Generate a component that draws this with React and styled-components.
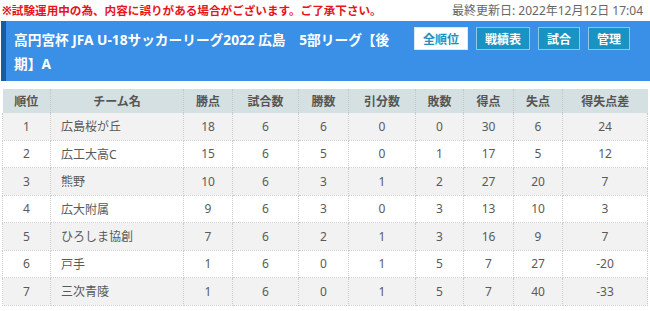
import React from "react";
import styled, { createGlobalStyle } from "styled-components";

const Global = createGlobalStyle`
  html, body { margin: 0; padding: 0; background: #fff; }
  body { font-family: "Noto Sans", "Noto Sans CJK JP", sans-serif; }
`;

const Page = styled.div`
  width: 650px;
`;

const Notice = styled.div`
  display: flex;
  justify-content: space-between;
  align-items: center;
  height: 21px;
  padding: 0 7px 0 2px;
  font-size: 12px;
  line-height: 21px;
`;

const Warn = styled.span`
  color: #e8141b;
  font-weight: 700;
  font-size: 11.6px;
`;

const Updated = styled.span`
  color: #666;
`;

const Header = styled.div`
  display: flex;
  align-items: flex-start;
  background: #3a8fe6;
  border-left: 5px solid #1b5c9e;
  margin-left: 1px;
  height: 60px;
  box-sizing: border-box;
  padding: 6px 20px 0 8px;
`;

const Title = styled.h1`
  flex: 1;
  margin: 1px 0 0;
  font-size: 13.7px;
  font-weight: 700;
  line-height: 24px;
  color: #fff;
  max-width: 385px;
`;

const Buttons = styled.div`
  display: flex;
  gap: 8px;
  margin-left: auto;
`;

const Btn = styled.div`
  height: 23px;
  box-sizing: border-box;
  padding: 0 8px;
  display: flex;
  align-items: center;
  font-size: 12px;
  font-weight: 700;
  border: 1px solid ${(p) => (p.$active ? "#d9e9f5" : "#8ec6e6")};
  background: ${(p) => (p.$active ? "#fff" : "#1b93c2")};
  color: ${(p) => (p.$active ? "#1f8fc0" : "#fff")};
`;

const Table = styled.table`
  margin: 8px 0 0 2px;
  width: 645px;
  border-collapse: collapse;
  table-layout: fixed;
  font-size: 12px;
  color: #5a5a5a;
`;

const Th = styled.th`
  background: #d4e0e1;
  height: 24px;
  font-weight: 700;
  color: #555;
  border-right: 1px dotted #c6c6c6;
  padding: 0;
  &:last-child { border-right: none; }
`;

const Row = styled.tr`
  background: ${(p) => (p.$odd ? "#f2f2f2" : "#fff")};
`;

const Td = styled.td`
  height: 26.5px;
  padding: 0 ${(p) => (p.$left ? "10px" : "0")};
  text-align: ${(p) => (p.$left ? "left" : "center")};
  border: 1px dotted #cdcdcd;
  border-top: none;
`;

const widths = [48, 133, 49, 66, 50, 67, 48, 50, 49, 85];
const heads = ["順位", "チーム名", "勝点", "試合数", "勝数", "引分数", "敗数", "得点", "失点", "得失点差"];
const rows = [
  [1, "広島桜が丘", 18, 6, 6, 0, 0, 30, 6, 24],
  [2, "広工大高C", 15, 6, 5, 0, 1, 17, 5, 12],
  [3, "熊野", 10, 6, 3, 1, 2, 27, 20, 7],
  [4, "広大附属", 9, 6, 3, 0, 3, 13, 10, 3],
  [5, "ひろしま協創", 7, 6, 2, 1, 3, 16, 9, 7],
  [6, "戸手", 1, 6, 0, 1, 5, 7, 27, -20],
  [7, "三次青陵", 1, 6, 0, 1, 5, 7, 40, -33],
];

export default function App() {
  return (
    <Page>
      <Global />
      <Notice>
        <Warn>※試験運用中の為、内容に誤りがある場合がございます。ご了承下さい。</Warn>
        <Updated>最終更新日: 2022年12月12日 17:04</Updated>
      </Notice>
      <Header>
        <Title>高円宮杯 JFA U-18サッカーリーグ2022 広島　5部リーグ【後期】A</Title>
        <Buttons>
          <Btn $active>全順位</Btn>
          <Btn>戦績表</Btn>
          <Btn>試合</Btn>
          <Btn>管理</Btn>
        </Buttons>
      </Header>
      <Table>
        <colgroup>
          {widths.map((w, i) => (
            <col key={i} style={{ width: w }} />
          ))}
        </colgroup>
        <thead>
          <tr>
            {heads.map((h) => (
              <Th key={h}>{h}</Th>
            ))}
          </tr>
        </thead>
        <tbody>
          {rows.map((r, i) => (
            <Row key={i} $odd={i % 2 === 0}>
              {r.map((c, j) => (
                <Td key={j} $left={j === 1}>
                  {c}
                </Td>
              ))}
            </Row>
          ))}
        </tbody>
      </Table>
    </Page>
  );
}
